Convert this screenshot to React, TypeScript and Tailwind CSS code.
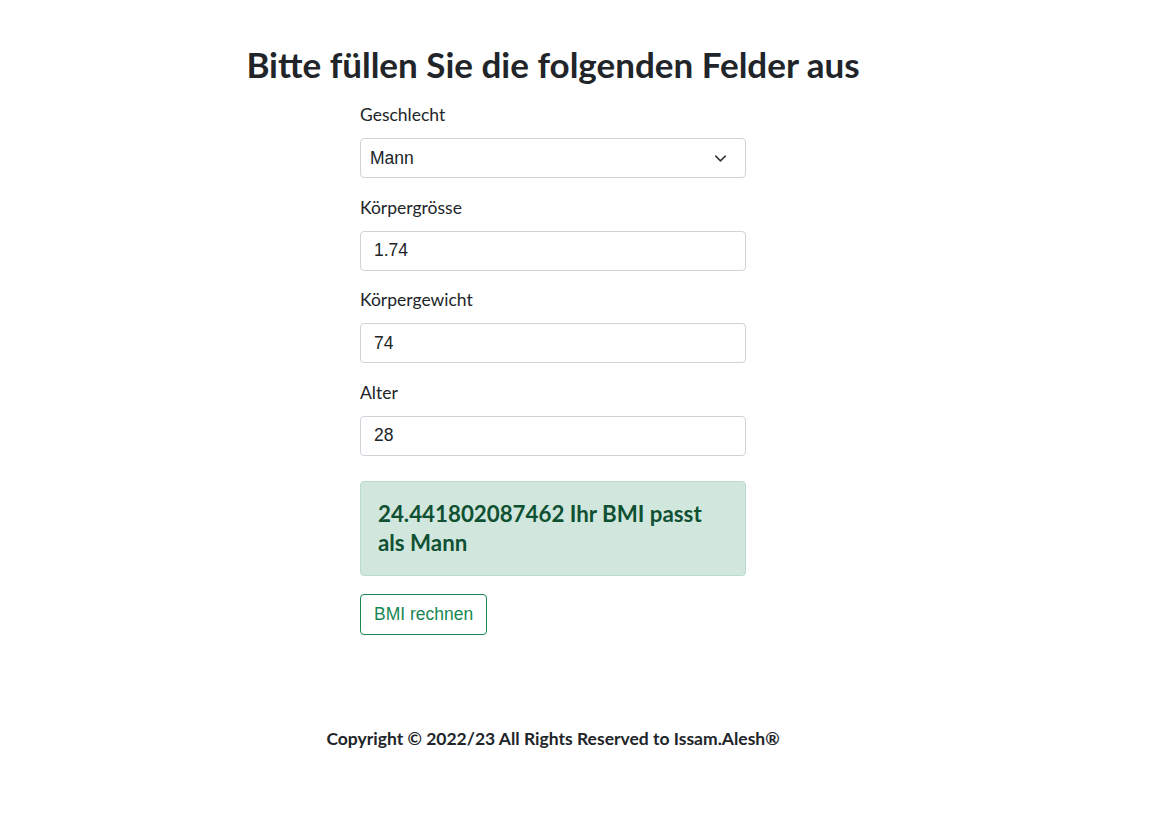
import { ChevronDown } from 'lucide-react';

const FIELDS = [
  { label: 'Körpergrösse', value: '1.74' },
  { label: 'Körpergewicht', value: '74' },
  { label: 'Alter', value: '28' },
];

export default function App() {
  return (
    <div className="min-h-[816px] bg-white w-[1106px] flex flex-col items-center text-[#212529] font-['Lato',sans-serif]">
      <h1 className="mt-[42.5px] text-[35px] leading-[42px] font-bold">
        Bitte füllen Sie die folgenden Felder aus
      </h1>

      <div className="w-[386px] mt-[18.5px]">
        <div>
          <label className="block text-[17.5px] leading-6 mb-[11px] pt-px -mt-px">Geschlecht</label>
          <div className="h-10 border border-[#ced4da] rounded flex items-center justify-between pl-[9px] pr-[15px] font-['Liberation_Sans',Arial,sans-serif] text-[17.5px]">
            <span>Mann</span>
            <ChevronDown size={19} strokeWidth={2} className="text-[#343a40]" />
          </div>
        </div>

        {FIELDS.map((f) => (
          <div key={f.label} className="mt-[17.5px]">
            <label className="block text-[17.5px] leading-6 mb-[11px]">{f.label}</label>
            <div className="h-10 border border-[#ced4da] rounded flex items-center pl-[13px] font-['Liberation_Sans',Arial,sans-serif] text-[17.5px]">
              {f.value}
            </div>
          </div>
        ))}

        <div className="mt-[25px] h-[95px] bg-[#d1e7dd] border border-[#badbcc] rounded px-[17px] pt-[17px] text-[#0f5132] text-[22.3px] leading-[29px] font-bold">
          24.441802087462 Ihr BMI passt als Mann
        </div>

        <button className="mt-[18px] h-[41px] px-[13px] pt-px border border-[#198754] rounded text-[#198754] font-['Liberation_Sans',Arial,sans-serif] text-[17.5px]">
          BMI rechnen
        </button>
      </div>

      <footer className="mt-[92px] text-[17.5px] leading-6 font-bold">
        Copyright © 2022/23 All Rights Reserved to Issam.Alesh®
      </footer>
    </div>
  );
}
